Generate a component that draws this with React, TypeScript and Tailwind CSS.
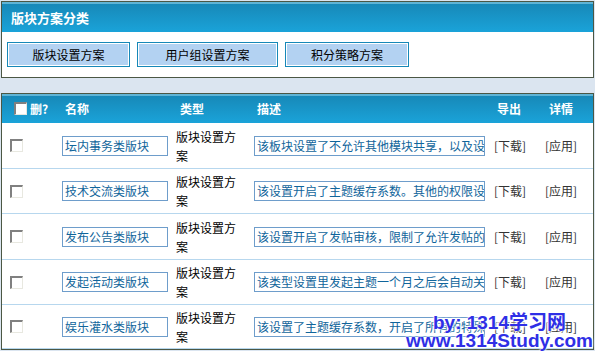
const rows = [
  { name: '坛内事务类版块', desc: '该板块设置了不允许其他模块共享，以及设置', h: 'h-[46px]' },
  { name: '技术交流类版块', desc: '该设置开启了主题缓存系数。其他的权限设置', h: 'h-[45px]' },
  { name: '发布公告类版块', desc: '该设置开启了发帖审核，限制了允许发帖的用户', h: 'h-[46px]' },
  { name: '发起活动类版块', desc: '该类型设置里发起主题一个月之后会自动关闭', h: 'h-[45px]' },
  { name: '娱乐灌水类版块', desc: '该设置了主题缓存系数，开启了所有的特殊', h: 'h-[44px]' },
];

const font = { fontFamily: '"Noto Sans CJK SC", "Noto Sans", sans-serif' };

function Check({ header }: { header?: boolean }) {
  return (
    <span
      className={`block w-[13px] h-[13px] border-t-2 border-l-2 border-b border-r border-t-[#808080] border-l-[#808080] border-b-[#e8e8e0] border-r-[#e8e8e0] ${
        header ? 'bg-white' : 'bg-white'
      }`}
    />
  );
}

function HeadBar({ children, className = '' }: { children: React.ReactNode; className?: string }) {
  return (
    <div className={`relative bg-gradient-to-b from-[#1787b6] to-[#1aa3d9] ${className}`}>
      <div className="absolute inset-x-0 top-0 h-[2px] bg-[#5fb4d6]" />
      {children}
    </div>
  );
}

export default function App() {
  return (
    <div className="relative w-[595px] h-[351px] overflow-hidden bg-[#dbe5f0] pt-px" style={font}>
      <div className="ml-px w-[593px] h-[77px] border border-[#4b5744] bg-white flex flex-col">
        <HeadBar className="h-[30px] flex items-center pl-[9px]">
          <span className="relative text-[13px] font-bold text-white leading-none">版块方案分类</span>
        </HeadBar>
        <div className="flex gap-[7px] pl-[5px] pt-[10px]">
          {[
            ['版块设置方案', 'w-[123px]'],
            ['用户组设置方案', 'w-[141px]'],
            ['积分策略方案', 'w-[124px]'],
          ].map(([t, w]) => (
            <div
              key={t}
              className={`${w} h-[25px] border border-[#1688b8] bg-[#b3d2f2] shadow-[inset_0_0_0_1px_#ffffff] flex items-center justify-center text-[12px] text-black`}
            >
              {t}
            </div>
          ))}
        </div>
      </div>

      <div className="ml-px mt-[15px] w-[593px] h-[257px] border border-[#4b5744] bg-white">
        <HeadBar className="h-[29px] grid grid-cols-[60px_114px_78px_240px_51px_1fr] items-center text-[12px] font-bold text-white">
          <div className="relative flex items-center gap-[3px] pl-[12px]">
            <Check header />
            <span>删?</span>
          </div>
          <div className="relative pl-[3px]">名称</div>
          <div className="relative pl-[4px]">类型</div>
          <div className="relative pl-[3px]">描述</div>
          <div className="relative pl-[3px]">导出</div>
          <div className="relative pl-[4px]">详情</div>
        </HeadBar>
        {rows.map((r) => (
          <div
            key={r.name}
            className={`${r.h} grid grid-cols-[60px_114px_78px_240px_51px_1fr] items-center border-b border-[#b7d7ee] text-[12px]`}
          >
            <div className="pl-[8px]">
              <Check />
            </div>
            <div className="w-[106px] h-[20px] border border-[#6e9dcb] text-[#10659b] leading-[18px] pl-[2px] overflow-hidden whitespace-nowrap">
              {r.name}
            </div>
            <div className="w-[64px] text-black leading-[19px]">版块设置方案</div>
            <div className="w-[231px] h-[20px] border border-[#6e9dcb] text-[#10659b] leading-[18px] pl-[2px] overflow-hidden whitespace-nowrap">
              {r.desc}
            </div>
            <div className="text-[#333]">[下载]</div>
            <div className="text-[#333]">[应用]</div>
          </div>
        ))}
      </div>

      <div
        className="absolute right-[2px] bottom-[1px] flex flex-col items-end font-bold text-[#2f2fe6] leading-[18px]"
        style={{
          fontFamily: '"Liberation Sans", "Noto Sans CJK SC", sans-serif',
          textShadow: '0 0 2px #fff, 0 0 2px #fff, 0 0 3px #fff',
        }}
      >
        <span className="text-[19px] mr-[27px]">by: 1314学习网</span>
        <span className="text-[19px]">www.1314Study.com</span>
      </div>
    </div>
  );
}
